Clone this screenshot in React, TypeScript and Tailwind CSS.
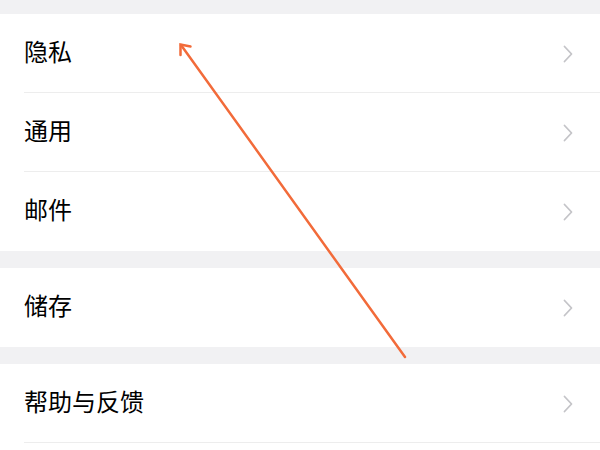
import React from 'react';

const Chevron = () => (
  <svg width="12" height="18" viewBox="0 0 12 18" fill="none">
    <path d="M2.5 1.5 L9.5 9 L2.5 16.5" stroke="#c4c4c8" strokeWidth="1.8" strokeLinecap="round" strokeLinejoin="round" />
  </svg>
);

const Row = ({ label, last }: { label: string; last?: boolean }) => (
  <div className="relative flex h-[79px] items-center justify-between bg-white pl-6 pr-[26px]">
    <span className="mb-[5px] text-[24px] leading-none text-black">{label}</span>
    <Chevron />
    {!last && <div className="absolute bottom-0 left-6 right-0 h-px bg-[#ededed]" />}
  </div>
);

const App = () => {
  return (
    <div
      className="relative h-[450px] w-[600px] overflow-hidden bg-[#f1f1f3]"
      style={{ fontFamily: '"Noto Sans CJK SC", "Noto Sans", sans-serif' }}
    >
      <div className="h-[14px]" />
      <div>
        <Row label="隐私" />
        <Row label="通用" />
        <Row label="邮件" last />
      </div>
      <div className="h-[17px]" />
      <Row label="储存" last />
      <div className="h-[17px]" />
      <div>
        <Row label="帮助与反馈" />
        <div className="h-[79px] bg-white" />
      </div>

      <svg className="pointer-events-none absolute left-0 top-0" width="600" height="450">
        <g stroke="#f26b3a" strokeWidth="2.5" strokeLinecap="round" fill="none">
          <line x1="405" y1="357" x2="181" y2="45" />
          <path d="M190.5 46.5 L180.5 44.5 L180.5 55" />
        </g>
      </svg>
    </div>
  );
};

export default App;
